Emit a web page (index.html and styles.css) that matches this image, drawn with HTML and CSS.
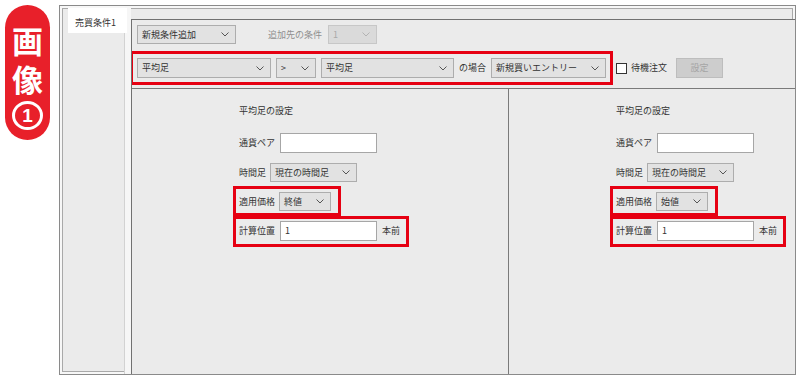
FILE: index.html
```html
<!DOCTYPE html>
<html lang="ja">
<head>
  <meta charset="UTF-8">
  <title>売買条件</title>
  <link rel="stylesheet" href="styles.css">
</head>
<body>
<div class="badge">
  <span class="badge-text">画<br>像</span>
  <span class="badge-num">1</span>
</div>

<div class="window">
  <div class="side">
    <div class="tab">売買条件1</div>
    <div class="side-list"></div>
  </div>

  <div class="main">
    <!-- add condition -->
    <div class="bar bar-add">
      <div class="combo c-add"><span>新規条件追加</span><svg viewBox="0 0 8 5"><polyline points="0.5,0.5 4,4 7.5,0.5"/></svg></div>
      <span class="muted label-target">追加先の条件</span>
      <div class="combo disabled c-target"><span>1</span><svg viewBox="0 0 8 5"><polyline points="0.5,0.5 4,4 7.5,0.5"/></svg></div>
    </div>

    <!-- condition row -->
    <div class="bar bar-cond">
      <div class="cond">
        <div class="combo c-src"><span>平均足</span><svg viewBox="0 0 8 5"><polyline points="0.5,0.5 4,4 7.5,0.5"/></svg></div>
        <div class="combo c-op"><span>&gt;</span><svg viewBox="0 0 8 5"><polyline points="0.5,0.5 4,4 7.5,0.5"/></svg></div>
        <div class="combo c-dst"><span>平均足</span><svg viewBox="0 0 8 5"><polyline points="0.5,0.5 4,4 7.5,0.5"/></svg></div>
        <span>の場合</span>
        <div class="combo c-action"><span>新規買いエントリー</span><svg viewBox="0 0 8 5"><polyline points="0.5,0.5 4,4 7.5,0.5"/></svg></div>
      </div>
      <span class="check"></span>
      <span class="check-label">待機注文</span>
      <div class="btn">設定</div>
    </div>

    <div class="panels">
      <div class="panel">
        <div class="panel-title">平均足の設定</div>
        <div class="field">
          <span>通貨ペア</span>
          <div class="textbox"></div>
        </div>
        <div class="field">
          <span>時間足</span>
          <div class="combo c-tf"><span>現在の時間足</span><svg viewBox="0 0 8 5"><polyline points="0.5,0.5 4,4 7.5,0.5"/></svg></div>
        </div>
        <div class="field mark">
          <span>適用価格</span>
          <div class="combo c-price"><span>終値</span><svg viewBox="0 0 8 5"><polyline points="0.5,0.5 4,4 7.5,0.5"/></svg></div>
        </div>
        <div class="field mark mark-pos">
          <span>計算位置</span>
          <div class="textbox">1</div>
          <span>本前</span>
        </div>
      </div>

      <div class="panel">
        <div class="panel-title">平均足の設定</div>
        <div class="field">
          <span>通貨ペア</span>
          <div class="textbox"></div>
        </div>
        <div class="field">
          <span>時間足</span>
          <div class="combo c-tf"><span>現在の時間足</span><svg viewBox="0 0 8 5"><polyline points="0.5,0.5 4,4 7.5,0.5"/></svg></div>
        </div>
        <div class="field mark">
          <span>適用価格</span>
          <div class="combo c-price"><span>始値</span><svg viewBox="0 0 8 5"><polyline points="0.5,0.5 4,4 7.5,0.5"/></svg></div>
        </div>
        <div class="field mark mark-pos">
          <span>計算位置</span>
          <div class="textbox">1</div>
          <span>本前</span>
        </div>
      </div>
    </div>
  </div>
</div>
</body>
</html>
```

FILE: styles.css
```css
* {
  margin: 0;
  padding: 0;
  box-sizing: border-box;
}

body {
  display: flex;
  align-items: flex-start;
  height: 380px;
  overflow: hidden;
  background: #fff;
  font-family: "Noto Sans CJK JP", "Noto Sans", sans-serif;
  font-size: 9px;
  line-height: 12px;
  color: #333;
}

/* red label on the left */
.badge {
  flex-shrink: 0;
  margin: 5px 9px 0 5px;
  width: 45px;
  height: 135px;
  border-radius: 23px;
  background: #e8202a;
  color: #fff;
  display: flex;
  flex-direction: column;
  align-items: center;
  padding-top: 18px;
}

.badge-text {
  font-family: "DejaVu Sans", "Noto Sans CJK JP", sans-serif;
  font-size: 31px;
  line-height: 39px;
  font-weight: 700;
  text-align: center;
}

.badge-num {
  width: 31px;
  height: 29px;
  border: 3px solid #fff;
  border-radius: 50%;
  display: flex;
  align-items: center;
  justify-content: center;
  font-family: "Liberation Sans", sans-serif;
  font-size: 19px;
  font-weight: 700;
}

/* window frame */
.window {
  flex-shrink: 0;
  margin-top: 5px;
  width: 737px;
  height: 370px;
  border: 1px solid #8a8a8a;
  background: #ebebeb;
  box-shadow: inset 0 0 0 2px #f7f7f7, inset 0 0 0 3px #a9a9a9;
  display: flex;
  overflow: hidden;
}

.side {
  flex-shrink: 0;
  width: 71px;
  display: flex;
  flex-direction: column;
  background: linear-gradient(to right, transparent 65px, #f6f6f6 65px);
}

.tab {
  margin: 2px 0 0 8px;
  width: 59px;
  height: 25px;
  padding: 9px 0 0 7px;
  background: #fff;
}

.side-list {
  flex: 1;
  width: 65px;
  border-right: 1px solid #d2d2d2;
}

.main {
  flex: 1;
  min-width: 0;
  overflow: hidden;
  margin-top: 13px;
  border-top: 1px solid #717171;
  border-left: 1px solid #717171;
  background: #ebebeb;
  display: flex;
  flex-direction: column;
}

/* toolbar rows */
.bar {
  display: flex;
  align-items: center;
  padding-left: 5px;
}

.bar-add {
  padding-top: 5px;
}

.muted {
  color: #8f8f8f;
}

.label-target {
  margin: 0 6px 0 32px;
}

.bar-cond {
  margin-top: 14px;
}

.cond {
  display: flex;
  align-items: center;
  gap: 5px;
  outline: 3px solid #e60012;
  outline-offset: 4px;
}

.check {
  margin-left: 10px;
  width: 11px;
  height: 11px;
  border: 1px solid #333;
  background: #fff;
}

.check-label {
  margin-left: 4px;
}

.btn {
  margin-left: 9px;
  width: 47px;
  height: 20px;
  display: flex;
  align-items: center;
  justify-content: center;
  background: #cdcdcd;
  border: 1px solid #bdbdbd;
  color: #a5a5a5;
}

/* combo box */
.combo {
  flex-shrink: 0;
  height: 19px;
  display: flex;
  align-items: center;
  justify-content: space-between;
  padding: 0 6px 0 4px;
  background: #e2e2e2;
  border: 1px solid #adadad;
  white-space: nowrap;
}

.combo svg {
  width: 8px;
  height: 5px;
  fill: none;
  stroke: #555;
  stroke-width: 1;
}

.combo.disabled {
  background: #dadada;
  border-color: #c7c7c7;
  color: #a9a9a9;
}

.combo.disabled svg {
  stroke: #b3b3b3;
}

.bar-cond .combo {
  height: 20px;
}

.c-add { width: 99px; }
.c-target { width: 49px; }
.c-src { width: 134px; }
.c-op { width: 40px; }
.c-dst { width: 133px; }
.c-action { width: 115px; }
.c-tf { width: 87px; }
.c-price { width: 52px; }

.textbox {
  flex-shrink: 0;
  width: 97px;
  height: 20px;
  padding-left: 4px;
  display: flex;
  align-items: center;
  background: #fff;
  border: 1px solid #a6a6a6;
}

/* settings panels */
.panels {
  flex: 1;
  margin-top: 10px;
  border-top: 1px solid #7a7a7a;
  display: flex;
}

.panel {
  width: 377px;
  flex-shrink: 0;
  padding: 16px 0 0 107px;
  border-right: 1px solid #7a7a7a;
  display: flex;
  flex-direction: column;
  align-items: flex-start;
  gap: 10px;
}

.panel:last-child {
  border-right: none;
}

.panel-title {
  margin-bottom: 6px;
}

.field {
  display: flex;
  align-items: center;
  gap: 5px;
}

.field .combo {
  margin-left: -1px;
}

/* red highlight boxes */
.mark {
  outline: 3px solid #e60012;
  padding: 3px 7px 2px 3px;
  margin: -3px -7px -2px -3px;
}

.mark-pos {
  padding: 2px 6px 3px 3px;
  margin: -2px -6px -3px -3px;
}
```
